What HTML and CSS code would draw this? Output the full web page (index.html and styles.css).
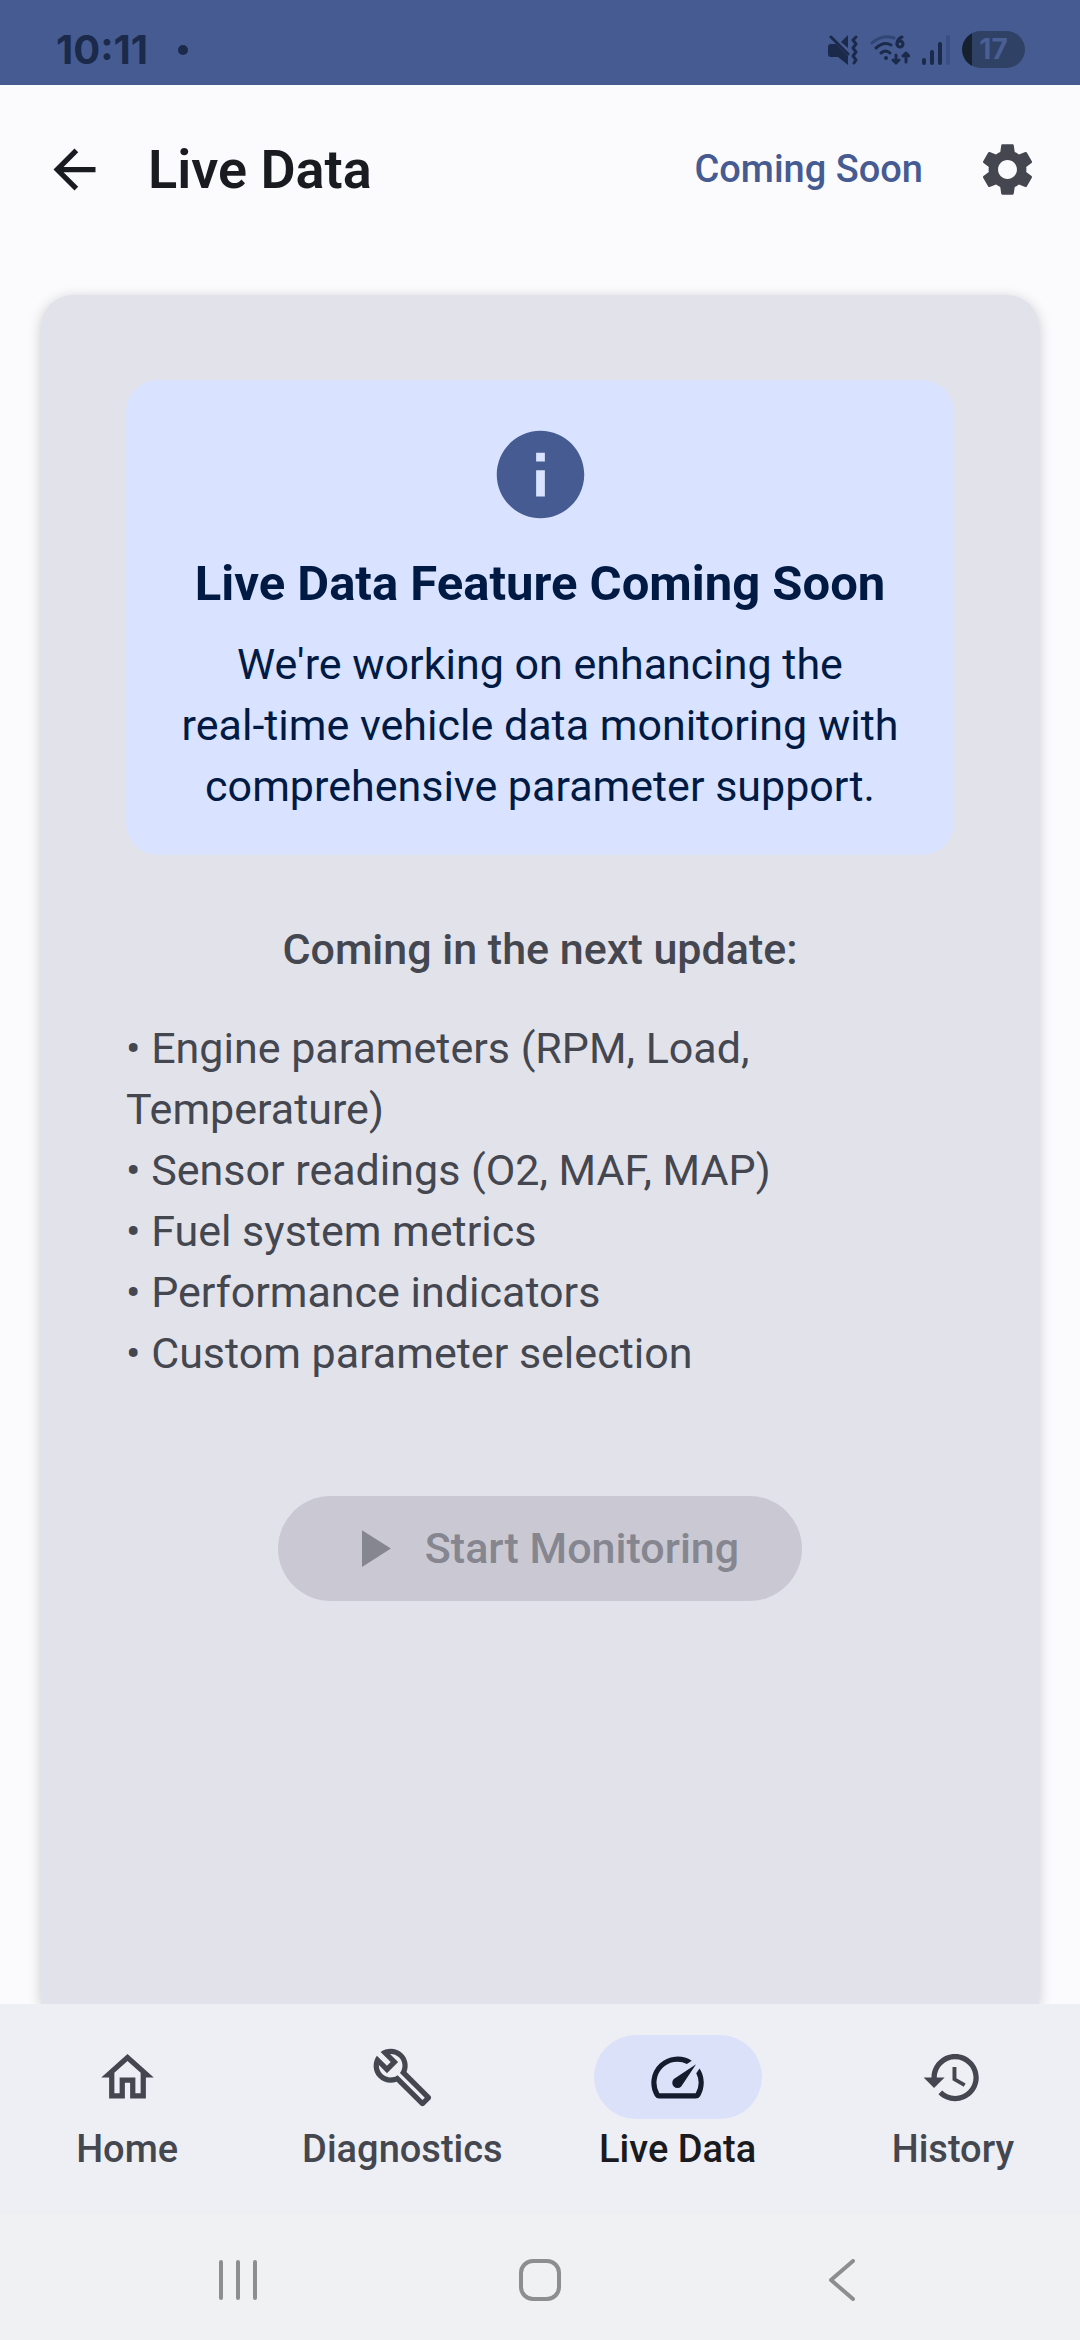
FILE: index.html
```html
<!DOCTYPE html>
<html lang="en">
<head>
<meta charset="utf-8">
<meta name="viewport" content="width=device-width, initial-scale=1">
<title>Live Data</title>
<link rel="stylesheet" href="styles.css">
</head>
<body>
<div class="status-bar">
  <div class="status-left">
    <span class="clock">10:11</span>
    <span class="notification-dot"></span>
  </div>
  <div class="status-right">
    <svg class="status-mute" viewBox="0 0 30 30" aria-hidden="true">
      <path d="M0 12q0-3 3-3h5l12 12v9l-10-8H3q-3 0-3-3zM13 7l7-7v13z" fill="#1b2a4a"/>
      <path d="M3 2l17 17M28 2l-3 3 3 4-3 4 3 4-3 4 3 4-2 3" fill="none" stroke="#1b2a4a" stroke-width="3" stroke-linecap="round" stroke-linejoin="round"/>
    </svg>
    <svg class="status-wifi" viewBox="0 0 40 30" aria-hidden="true">
      <g fill="none" stroke-width="3" stroke-linecap="round">
        <path d="M2 8Q12-1 24 3" stroke="#304674"/>
        <path d="M6 13q8-7 15-3M11 18q5-4 9 0" stroke="#1b2a4a"/>
        <path d="M32 2q-5 2-5 7" stroke="#1b2a4a"/>
        <circle cx="30" cy="9" r="3" stroke="#1b2a4a"/>
        <path d="M26 20v8m-3-3l3 3 3-3M36 27v-9m-3 3l3-3 3 3" stroke="#1b2a4a" stroke-linejoin="round"/>
      </g>
      <circle cx="16" cy="23" r="2" fill="#1b2a4a"/>
    </svg>
    <svg class="status-signal" viewBox="0 0 28 30" aria-hidden="true">
      <path d="M2 25v3M10 17v11M18 9v19" stroke="#1b2a4a" stroke-width="4" stroke-linecap="round"/>
      <path d="M26 2v26" stroke="#3a5084" stroke-width="4" stroke-linecap="round"/>
    </svg>
    <span class="battery">17</span>
  </div>
</div>

<header class="app-bar">
  <button class="icon-button" type="button" aria-label="Back">
    <svg class="icon" viewBox="0 0 24 24"><path d="M20 11H7.83l5.59-5.59L12 4l-8 8 8 8 1.41-1.41L7.83 13H20v-2z"/></svg>
  </button>
  <h1 class="app-title">Live Data</h1>
  <span class="app-status">Coming Soon</span>
  <button class="icon-button icon-button-muted" type="button" aria-label="Settings">
    <svg class="icon" viewBox="0 0 24 24"><path d="M19.14 12.94c.04-.3.06-.61.06-.94 0-.32-.02-.64-.07-.94l2.03-1.58c.18-.14.23-.41.12-.61l-1.92-3.32c-.12-.22-.37-.29-.59-.22l-2.39.96c-.5-.38-1.03-.7-1.62-.94l-.36-2.54c-.04-.24-.24-.41-.48-.41h-3.84c-.24 0-.43.17-.47.41l-.36 2.54c-.59.24-1.13.57-1.62.94l-2.39-.96c-.22-.08-.47 0-.59.22L2.74 8.87c-.12.21-.08.47.12.61l2.03 1.58c-.05.3-.09.63-.09.94s.02.64.07.94l-2.03 1.58c-.18.14-.23.41-.12.61l1.92 3.32c.12.22.37.29.59.22l2.39-.96c.5.38 1.03.7 1.62.94l.36 2.54c.05.24.24.41.48.41h3.84c.24 0 .44-.17.47-.41l.36-2.54c.59-.24 1.13-.56 1.62-.94l2.39.96c.22.08.47 0 .59-.22l1.92-3.32c.12-.22.07-.47-.12-.61l-2.01-1.58zM12 15.6c-1.98 0-3.6-1.62-3.6-3.6s1.62-3.6 3.6-3.6 3.6 1.62 3.6 3.6-1.62 3.6-3.6 3.6z"/></svg>
  </button>
</header>

<main class="content">
  <section class="card">
    <div class="notice">
      <svg class="notice-icon" viewBox="0 0 24 24" aria-hidden="true"><path d="M12 2C6.48 2 2 6.48 2 12s4.48 10 10 10 10-4.480 10-10S17.52 2 12 2zm1 15h-2v-6h2v6zm0-8h-2V7h2v2z"/></svg>
      <h2 class="notice-title">Live Data Feature Coming Soon</h2>
      <p class="notice-text">We're working on enhancing the<br>real-time vehicle data monitoring with<br>comprehensive parameter support.</p>
    </div>
    <h3 class="list-title">Coming in the next update:</h3>
    <ul class="feature-list">
      <li>• Engine parameters (RPM, Load,<br>Temperature)</li>
      <li>• Sensor readings (O2, MAF, MAP)</li>
      <li>• Fuel system metrics</li>
      <li>• Performance indicators</li>
      <li>• Custom parameter selection</li>
    </ul>
    <button class="start-button" type="button" disabled>
      <svg class="icon" viewBox="0 0 24 24" aria-hidden="true"><path d="M8 5v14l11-7z"/></svg>
      Start Monitoring
    </button>
  </section>
</main>

<footer class="bottom">
  <nav class="tabs">
    <a class="tab" href="#home">
      <span class="tab-indicator"><svg class="icon" viewBox="0 0 24 24" aria-hidden="true"><path d="M12 5.690l5 4.500V18h-2v-6H9v6H7v-7.810l5-4.500M12 3L2 12h3v8h6v-6h2v6h6v-8h3L12 3z"/></svg></span>
      Home
    </a>
    <a class="tab" href="#diagnostics">
      <span class="tab-indicator"><svg class="icon" viewBox="0 0 24 24" aria-hidden="true"><path fill-rule="evenodd" d="M22.610 18.990l-9.080-9.080c.93-2.340.45-5.100-1.440-7C9.790.61 6.210.4 3.660 2.260L7.500 6.110 6.080 7.520 2.250 3.690C.39 6.230.6 9.820 2.900 12.110c1.860 1.860 4.570 2.350 6.890 1.480l9.110 9.110c.39.39 1.020.39 1.410 0l2.300-2.300c.4-.38.4-1.010 0-1.410zm-3 1.600l-9.460-9.460c-.61.45-1.290.72-2 .82-1.360.2-2.790-.21-3.830-1.250C3.370 9.760 2.930 8.500 3 7.260l3.090 3.090 4.240-4.240-3.090-3.090c1.240-.07 2.490.37 3.440 1.310 1.080 1.080 1.490 2.570 1.240 3.960-.12.71-.42 1.370-.88 1.960l9.450 9.450-.88.89z"/></svg></span>
      Diagnostics
    </a>
    <a class="tab tab-active" href="#live-data" aria-current="page">
      <span class="tab-indicator"><svg class="icon" viewBox="0 0 24 24" aria-hidden="true"><path d="M20.380 8.570l-1.230 1.850a8 8 0 0 1-.22 7.580H5.070A8 8 0 0 1 15.580 6.850l1.850-1.230A10 10 0 0 0 3.350 19a2 2 0 0 0 1.720 1h13.850a2 2 0 0 0 1.740-1 10 10 0 0 0-.27-10.440z"/><path d="M10.590 15.410a2 2 0 0 0 2.830 0l5.660-8.490-8.490 5.660a2 2 0 0 0 0 2.830z"/></svg></span>
      Live Data
    </a>
    <a class="tab" href="#history">
      <span class="tab-indicator"><svg class="icon" viewBox="0 0 24 24" aria-hidden="true"><path d="M13 3c-4.970 0-9 4.030-9 9H1l3.890 3.890.07.14L9 12H6c0-3.870 3.130-7 7-7s7 3.130 7 7-3.130 7-7 7c-1.930 0-3.680-.79-4.940-2.060l-1.420 1.420C8.270 19.990 10.510 21 13 21c4.970 0 9-4.030 9-9s-4.030-9-9-9zm-1 5v5l4.280 2.540.72-1.210-3.500-2.080V8H12z"/></svg></span>
      History
    </a>
  </nav>
  <div class="system-nav">
    <button class="system-button" type="button" aria-label="Recent apps"><svg class="system-icon" viewBox="0 0 42 42"><path d="M4 3v36M21 3v36M38 3v36"/></svg></button>
    <button class="system-button" type="button" aria-label="Home screen"><svg class="system-icon" viewBox="0 0 42 42"><rect x="2" y="2" width="38" height="38" rx="12"/></svg></button>
    <button class="system-button" type="button" aria-label="Go back"><svg class="system-icon" viewBox="0 0 42 42"><path d="M32 2L10 21l22 19"/></svg></button>
  </div>
</footer>
</body>
</html>
```

FILE: styles.css
```css
* {
  box-sizing: border-box;
}

body {
  margin: 0;
  min-height: 100vh;
  display: flex;
  flex-direction: column;
  background: #fbfbfe;
  color: #1a1b20;
  font-family: Roboto, "Noto Sans", sans-serif;
  font-size: 43px;
  line-height: 61px;
}

h1, h2, h3, p, ul {
  margin: 0;
  padding: 0;
}

button {
  margin: 0;
  padding: 0;
  border: 0;
  background: none;
  color: inherit;
  font: inherit;
}

.icon {
  display: block;
  width: 63px;
  height: 63px;
  fill: currentColor;
}

/* Status bar */
.status-bar {
  display: flex;
  align-items: center;
  justify-content: space-between;
  height: 85px;
  padding: 14px 55px 0 56px;
  background: #465b91;
  color: #1b2a4a;
  font-family: Inter, Roboto, sans-serif;
}

.status-left,
.status-right {
  display: flex;
  align-items: center;
}

.status-left {
  gap: 30px;
}

.status-right {
  gap: 12px;
}

.clock {
  font-size: 40px;
  font-weight: 700;
  line-height: 44px;
}

.notification-dot {
  width: 10px;
  height: 10px;
  border-radius: 50%;
  background: #1b2a4a;
}

.status-mute {
  width: 30px;
  height: 30px;
}

.status-wifi {
  width: 40px;
  height: 30px;
}

.status-signal {
  width: 28px;
  height: 30px;
}

.battery {
  width: 63px;
  height: 37px;
  border-radius: 19px;
  background: linear-gradient(to right, #16202f 10px, #304166 10px);
  color: #4a5f94;
  font-size: 28px;
  font-weight: 700;
  line-height: 37px;
  text-align: center;
}

/* App bar */
.app-bar {
  display: flex;
  align-items: center;
  height: 168px;
  padding: 0 41px 0 43px;
}

.icon-button-muted {
  color: #44474f;
}

.app-title {
  flex: 1;
  margin-left: 42px;
  font-size: 54px;
  font-weight: 600;
}

.app-status {
  margin-right: 53px;
  color: #465b91;
  font-size: 38px;
  font-weight: 500;
}

/* Content */
.content {
  flex: 1;
  display: flex;
  flex-direction: column;
  padding: 42px 41px 0;
}

.card {
  flex: 1;
  display: flex;
  flex-direction: column;
  align-items: center;
  padding: 85px;
  border-radius: 32px 32px 0 0;
  background: #e2e2eb;
  box-shadow: 0 3px 14px rgba(0, 0, 0, 0.2);
  color: #44474f;
}

.notice {
  display: flex;
  flex-direction: column;
  align-items: center;
  align-self: stretch;
  padding: 42px 20px 38px;
  border-radius: 32px;
  background: #d9e2ff;
  color: #001a43;
  text-align: center;
}

.notice-icon {
  width: 105px;
  height: 105px;
  margin-bottom: 26px;
  fill: #465b91;
}

.notice-title {
  margin-bottom: 20px;
  font-size: 49px;
  font-weight: 700;
}

.list-title {
  margin: 64px 0 38px;
  font-size: 43px;
  font-weight: 500;
}

.feature-list {
  align-self: stretch;
  list-style: none;
}

.start-button {
  display: flex;
  align-items: center;
  gap: 21px;
  height: 105px;
  margin-top: 112px;
  padding: 0 63px;
  border-radius: 53px;
  background: #cac9d3;
  color: #868690;
  font-weight: 500;
}

/* Bottom navigation */
.bottom {
  position: sticky;
  bottom: 0;
}

.tabs {
  display: grid;
  grid-template-columns: repeat(4, 1fr);
  gap: 21px;
  height: 210px;
  padding-top: 31px;
  background: #eeeff5;
}

.tab {
  display: flex;
  flex-direction: column;
  align-items: center;
  color: #44474f;
  font-size: 38px;
  font-weight: 500;
  text-decoration: none;
}

.tab-indicator {
  display: flex;
  align-items: center;
  justify-content: center;
  width: 168px;
  height: 84px;
  border-radius: 42px;
}

.tab-active {
  color: #1a1b20;
}

.tab-active .tab-indicator {
  background: #dbe1f9;
  color: #141b2c;
}

.system-nav {
  display: flex;
  align-items: center;
  justify-content: center;
  height: 126px;
  padding-top: 6px;
  background: #f0f1f3;
}

.system-button {
  display: flex;
  justify-content: center;
  width: 28%;
}

.system-icon {
  width: 42px;
  height: 42px;
  fill: none;
  stroke: #8e8e8e;
  stroke-width: 4;
  stroke-linecap: round;
  stroke-linejoin: round;
}
```
